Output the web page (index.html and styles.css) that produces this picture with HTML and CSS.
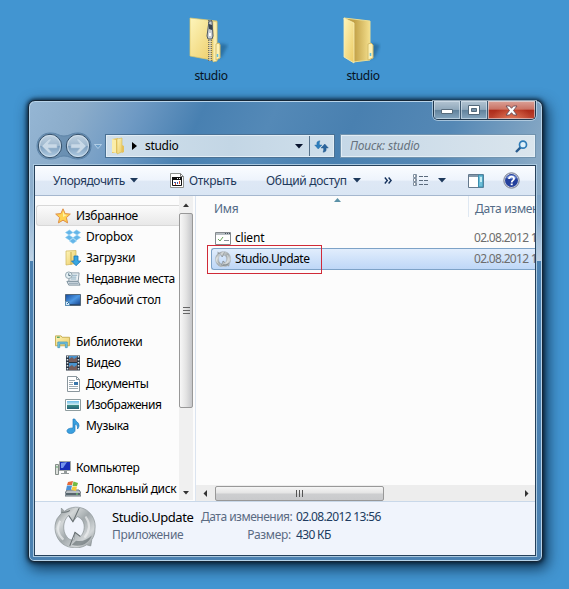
FILE: index.html
```html
<!DOCTYPE html>
<html lang="ru">
<head>
<meta charset="utf-8">
<title>studio</title>
<link rel="stylesheet" href="styles.css">
</head>
<body>
<svg class="defs" width="0" height="0" aria-hidden="true">
  <defs>
    <linearGradient id="gold" x1="0" y1="0" x2="1" y2="1"><stop offset="0" stop-color="#fdf5bb"/><stop offset="1" stop-color="#ecca62"/></linearGradient>
    <linearGradient id="goldDark" x1="0" y1="0" x2="1" y2="0"><stop offset="0" stop-color="#b8963f"/><stop offset=".4" stop-color="#c3a248"/><stop offset="1" stop-color="#f4df8d"/></linearGradient>
    <linearGradient id="steel" x1="0" y1="0" x2="1" y2="1"><stop offset="0" stop-color="#737b7e"/><stop offset=".28" stop-color="#d3d7d8"/><stop offset=".5" stop-color="#a2a9ac"/><stop offset=".75" stop-color="#d2d6d8"/><stop offset="1" stop-color="#7b8386"/></linearGradient>
    <linearGradient id="glass" x1="0" y1="0" x2="0" y2="1"><stop offset="0" stop-color="#c3d4e2"/><stop offset=".5" stop-color="#9db7ce"/><stop offset=".52" stop-color="#7fa0bf"/><stop offset="1" stop-color="#b4cfe5"/></linearGradient>
    <linearGradient id="sea" x1="0" y1="0" x2="0" y2="1"><stop offset="0" stop-color="#6bbbe8"/><stop offset=".5" stop-color="#d4eef0"/><stop offset=".55" stop-color="#3b8b85"/><stop offset="1" stop-color="#245f78"/></linearGradient>
    <linearGradient id="desk" x1="0" y1="0" x2="1" y2="1"><stop offset="0" stop-color="#164a9c"/><stop offset=".5" stop-color="#4d98e4"/><stop offset="1" stop-color="#123c86"/></linearGradient>
    <filter id="soft" x="-50%" y="-50%" width="200%" height="200%"><feGaussianBlur stdDeviation="1.8"/></filter>
    <symbol id="update" viewBox="0 0 40 40">
      <path fill-rule="evenodd" d="M7 2l3 3C16 0 25 0 31 4c6 4 9 11 8 18 0 4-1 7-3 10l-1 6-4-1C25 41 15 41 8 36 1 30-1 20 3 12l4-5zM22 10l-4 5-4-6C8 14 8 24 12 29c2 3 5 4 7 3l1-7 5 4c5-4 6-16-3-19z" fill="url(#steel)" stroke="#8d9598" stroke-width=".7"/>
      <path d="M7 6c4 0 7 0 8-2" fill="none" stroke="#6c7578"/>
      <path d="M24 2l-6 13-4-6" fill="none" stroke="#687073" stroke-width="1"/>
      <path d="M15 38l5-13 5 4" fill="none" stroke="#687073" stroke-width="1"/>
      <path d="M17 37l4-4c6 1 11-1 15-5-2 6-9 12-19 9z" fill="#5f696c" opacity=".6"/>
      <path d="M30 10c5 7 4 14-1 20M6 14c-4 7-2 14 3 18" fill="none" stroke="#eceeef" stroke-width="2" opacity=".7"/>
    </symbol>
  </defs>
</svg>

<main class="desktop">
  <div class="shortcuts">
    <div class="shortcut">
      <svg width="44" height="52" viewBox="0 0 44 52">
        <path d="M29 43l6-15 8 2-6 12-9 3z" fill="#184f78" opacity=".5" filter="url(#soft)"/>
        <path d="M5 3l27 3v40L5 41z" fill="url(#gold)" stroke="#dac66c" stroke-width=".7"/>
        <path d="M28 6l4 1v39l-4 1z" fill="#f9edaf" stroke="#d0b85e" stroke-width=".5"/>
        <path d="M31 29l3-1 1 2v13l-4 2z" fill="#fcf1b7" stroke="#d5bd6a"/>
        <path d="M32.500 39v3" stroke="#62bddd" stroke-width="1.500"/>
        <path d="M25 5v41" stroke="#77715d" stroke-width="4" stroke-dasharray="1 1"/>
        <path d="M25 5v41" stroke="#ddd9c7" stroke-width="1.200"/>
        <path d="M24 6h3l1 15-1 3h-4l-1-3z" fill="#c7cdd2" stroke="#4d5864"/>
        <path d="M24 9l3 1v5l-3-1z" fill="#38434e"/><path d="M24 21v-3h2v3z" fill="#fff"/>
      </svg>
      <span>studio</span>
    </div>
    <div class="shortcut">
      <svg width="44" height="52" viewBox="0 0 44 52">
        <path d="M28 43l7-15 8 2-5 12-9 3z" fill="#184f78" opacity=".5" filter="url(#soft)"/>
        <path d="M7 3l26 3v39l-17 2z" fill="url(#goldDark)" stroke="#eadd93"/>
        <path d="M7 3l10 5v40L7 42z" fill="url(#gold)" stroke="#f9efb7" stroke-width=".8"/>
        <path d="M31 29l3-1 2 2v13l-5 2z" fill="#fcf1b7" stroke="#d5bd6a"/>
        <path d="M33.500 38v3" stroke="#62bddd" stroke-width="1.500"/>
      </svg>
      <span>studio</span>
    </div>
  </div>

  <section class="window">
    <header class="titlebar">
      <div class="caption">
        <button class="cap min" aria-label="Свернуть"><svg width="13" height="6"><path d="M.5.500h11v4H.5z" fill="#fff" stroke="#586c7c"/></svg></button>
        <button class="cap max" aria-label="Развернуть"><svg width="13" height="11"><path d="M.5.500h11v9H.5z" fill="#fff" stroke="#53687a"/><path d="M3.500 3.500h5v3h-5z" fill="#7793a8" stroke="#53687a"/></svg></button>
        <button class="cap close" aria-label="Закрыть"><svg width="13" height="11" viewBox="0 0 13 11"><path d="M1 1h3.500l2 2.300L8.500 1H12L8.500 5.500 12 10H8.500l-2-2.300-2 2.300H1l3.500-4.500z" fill="#fff" stroke="#664b55" stroke-width=".9"/></svg></button>
      </div>
    </header>

    <nav class="addressrow">
      <svg class="history" width="70" height="28" viewBox="0 0 70 28">
        <path d="M14 1C22 1 22 4 28 4S35 1 42 1c8 0 13 6 13 13s-5 13-13 13c-7 0-8-3-14-3s-6 3-14 3C6 27 1 21 1 14S6 1 14 1z" fill="#4d779d" opacity=".5" stroke="#315c85"/>
        <circle cx="14" cy="14" r="11.700" fill="url(#glass)" stroke="#344f69"/><circle cx="14" cy="14" r="10.500" fill="none" stroke="#d4e2ee" opacity=".8"/>
        <circle cx="42" cy="14" r="11.700" fill="url(#glass)" stroke="#344f69"/><circle cx="42" cy="14" r="10.500" fill="none" stroke="#d4e2ee" opacity=".8"/>
        <path d="M6 14l7-7h3l-4 5h9v4h-9l4 5h-3z" fill="#c9d9e7" stroke="#a7bfd4" stroke-width=".6"/>
        <path d="M50 14l-7-7h-3l4 5h-9v4h9l-4 5h3z" fill="#c9d9e7" stroke="#a7bfd4" stroke-width=".6"/>
        <path d="M58.500 12.500h7l-3.500 4z" fill="#6d9fc9" stroke="#c0d8ec" stroke-width=".8"/>
      </svg>
      <div class="address">
        <svg width="16" height="18" viewBox="0 0 16 18"><path d="M2 2l6-1v15H2z" fill="#e5c360"/><path d="M2 2l4 1v13l-4-1z" fill="#faedaa"/><path d="M7 2l5-1v14l-5 2z" fill="url(#gold)" stroke="#d4b956" stroke-width=".6"/><path d="M12 8l2 1v6l-2 1z" fill="#e6c15b"/></svg>
        <svg class="crumb" width="5" height="8"><path d="M0 0l5 4-5 4z" fill="#000"/></svg>
        <span class="path">studio</span>
        <svg class="drop" width="8" height="5"><path d="M0 0h8L4 4.500z" fill="#08142e"/></svg>
        <div class="refresh"><svg width="15" height="13" viewBox="0 0 15 13"><path d="M6 .8C3 1 2.500 2.500 3 5H.7l3.500 4L8 5H5.500C5.200 3 5.500 2 6 .8z" fill="#2c7ebd" stroke="#24689e" stroke-width=".4"/><path d="M9 12.200c3-.2 3.500-1.700 3-4.200h2.300l-3.500-4L7 8h2.500c.3 2 0 3-.5 4.200z" fill="#2b659d" stroke="#1c5287" stroke-width=".4"/></svg></div>
      </div>
      <div class="search"><span>Поиск: studio</span>
        <svg width="13" height="13" viewBox="0 0 13 13"><path d="M5.800 7.200L1 12" stroke="#285a8d" stroke-width="2.400"/><circle cx="8" cy="4.700" r="3.500" fill="#dff1fb" stroke="#2e7bb7" stroke-width="1.700"/></svg>
      </div>
    </nav>

    <div class="client">
      <div class="toolbar">
        <span class="cmd organize">Упорядочить</span><svg class="arr a1" width="8" height="5"><path d="M0 0h8L4 4.500z"/></svg>
        <svg class="openicon" width="14" height="15" viewBox="0 0 14 15"><path d="M.5.500h10l3 3v11H.5z" fill="#fff" stroke="#8e928f"/><path d="M10.500.500v3h3" fill="none" stroke="#777"/><path d="M2.500 4.500h9v8h-9z" fill="#fff" stroke="#111"/><path d="M2 4h10v3H2z" fill="#111"/><path d="M7 5.500h1m1 0h1" stroke="#fff"/><path d="M4 9h2v1H4zm3 0h1v2H7z" fill="#3459a6"/><path d="M5 10h1v2H5zm4-2h1v3H9z" fill="#cf4c32"/></svg>
        <span class="cmd open">Открыть</span><span class="cmd share">Общий доступ</span><svg class="arr a2" width="8" height="5"><path d="M0 0h8L4 4.500z"/></svg>
        <svg class="more" width="8" height="7"><path d="M.8.500l2.500 3-2.500 3M4.600.500l2.500 3-2.500 3" fill="none" stroke="#14315b" stroke-width="1.400"/></svg>
        <svg class="views" width="16" height="13"><g fill="#fff" stroke="#8190a1"><path d="M.5.500h3v3h-3zM.5 4.500h3v3h-3zM.5 8.500h3v3h-3z"/></g><path d="M6 2.500h4m1 0h4M6 6.500h4m1 0h4M6 10.500h4m1 0h4" stroke="#5b6b7c"/><path d="M2 2h1M2 6h1m-1 4h1" stroke="#345"/></svg>
        <svg class="arr a3" width="8" height="5"><path d="M0 0h8L4 4.500z"/></svg>
        <svg class="pane" width="16" height="14"><path d="M.5.500h15v13H.5z" fill="#fff" stroke="#64798d"/><path d="M1 2h9" stroke="#8498aa" stroke-width="2"/><path d="M10.500 1v12H15V1z" fill="#6dbed8" stroke="#3b8eaf"/><path d="M12 3h2v5h-2z" fill="#c4edf4"/></svg>
        <svg class="help" width="17" height="17" viewBox="0 0 17 17"><circle cx="8.500" cy="8.500" r="7.700" fill="#d3d7e4" stroke="#777e91"/><circle cx="8.500" cy="8.500" r="6.500" fill="#233f9c"/><path d="M3 6c2-4 9-4 11 0-3 2-7 1-11 0z" fill="#6f8ad1"/><path d="M6 7c0-3 5-3.200 5-.3C11 8.500 8.700 8.300 8.700 10.400" fill="none" stroke="#fff" stroke-width="1.800"/><path d="M7.700 11.500h2v1.700h-2z" fill="#fff"/></svg>
      </div>

      <div class="body">
        <aside class="nav">
          <ul class="tree">
            <li class="root current"><svg width="16" height="16" viewBox="0 0 16 16"><path d="M8 .8l2.100 4.800 5.200.5-3.900 3.500 1.200 5.300L8 12.200l-4.600 2.700 1.200-5.300L.7 6.100l5.200-.5z" fill="#ffd24f" stroke="#df9048"/><path d="M8 3l1.300 3.500L12 7 8 9z" fill="#fff2a4"/></svg><span>Избранное</span></li>
            <li><svg width="16" height="16" viewBox="0 0 16 16"><path d="M4.500 1L8 3.500 4 6 .5 3.500zM11.500 1L8 3.500 12 6l3.500-2.500zM4 6l4 2.700-3.500 2.500L.5 8.500zM12 6L8 8.700l3.500 2.500 4-2.700zM4.500 12L8 9.500l3.500 2.500L8 14.500z" fill="#65b5e8" stroke="#8bd0f3" stroke-width=".6"/></svg><span>Dropbox</span></li>
            <li><svg width="16" height="16" viewBox="0 0 16 16"><path d="M1 1l10-.5v13L1 15z" fill="url(#gold)" stroke="#ceb458" stroke-width=".7"/><path d="M6 2v13" stroke="#c8aa4c"/><path d="M9 6h4v5h3l-5 4.700L6.500 11H9z" fill="#38a6df" stroke="#1a75b7" stroke-width=".8"/></svg><span>Загрузки</span></li>
            <li><svg width="17" height="16" viewBox="0 0 17 16"><path d="M5 1.500h10l-1 9H4z" fill="#edf3f6" stroke="#8799a5"/><path d="M7 4h6M6 6h6M6 8h6" stroke="#82a5bb"/><path d="M2 10.500h12l2 4H4z" fill="#dbe5eb" stroke="#798c99"/><path d="M4 12.500h10" stroke="#8499a7"/><circle cx="4" cy="4" r="3.500" fill="#e6f1f5" stroke="#90a3ad"/><path d="M4 2v2.300l2 .2" fill="none" stroke="#49677a"/></svg><span class="tight">Недавние места</span></li>
            <li><svg width="16" height="16" viewBox="0 0 16 16"><path d="M.5 2.500h15v11H.5z" fill="url(#desk)" stroke="#546779"/><path d="M1 12.500h14" stroke="#274c78"/><path d="M.5 9.500h4v4h-4z" fill="#d2e8f8" stroke="#5c8fb5"/><path d="M2 12l2-2" stroke="#2268a9"/></svg><span>Рабочий стол</span></li>
            <li class="gap"></li>
            <li class="root"><svg width="17" height="16" viewBox="0 0 17 16"><path d="M.5 1.500h6l1 1.500h8v9H.5z" fill="url(#gold)" stroke="#c6ad50"/><path d="M2 3h3" stroke="#56a663" stroke-width="1.500"/><path d="M3 14V8h10v6h-2v-4H5v4z" fill="#75c4df" stroke="#4697b8" stroke-width=".8"/></svg><span>Библиотеки</span></li>
            <li><svg width="16" height="16" viewBox="0 0 16 16"><path d="M1 .5h14v15H1z" fill="#293442"/><path d="M4 1h8v6H4zm0 7h8v7H4z" fill="#4993ce"/><path d="M4 4l3-2 2 2 3-2v5H4zm0 8l3-2 2 2 3-2v5H4z" fill="#765d5c"/><path d="M2.500 1v14m11-14v14" stroke="#e0e6ea" stroke-width="1.500" stroke-dasharray="1.500 1.500"/></svg><span>Видео</span></li>
            <li><svg width="16" height="16" viewBox="0 0 16 16"><path d="M2.500.5h9l3 3v12h-12z" fill="#fff" stroke="#8a969d"/><path d="M11.500.5v3h3" fill="none" stroke="#8a969d"/><path d="M4 4.500h6m-6 2h4m-4 2h4m-4 2h9m-9 2h9" stroke="#9ba9b2"/><path d="M9 6h4v3H9z" fill="#3a76aa"/></svg><span class="tight">Документы</span></li>
            <li><svg width="16" height="16" viewBox="0 0 16 16"><path d="M.5 2.500h15v11H.5z" fill="#fff" stroke="#8e9c9f"/><path d="M2 4h12v8H2z" fill="url(#sea)"/></svg><span class="tight">Изображения</span></li>
            <li><svg width="16" height="16" viewBox="0 0 16 16"><path d="M8 1h1.800c.5 2.500 4.200 3 4.200 6.500 0 1.300-.6 2.500-1.500 3.500.5-3-.8-4.500-2.500-5v6.500C10 14 8.200 15.500 5.500 15.500S2 14 2 12.700 4 10 8 10z" fill="#3aa0df" stroke="#1f79bb" stroke-width=".7"/></svg><span>Музыка</span></li>
            <li class="gap"></li>
            <li class="root"><svg width="16" height="16" viewBox="0 0 16 16"><path d="M4.500 1.500h11v9h-11z" fill="#172eb7" stroke="#a0a6a4"/><path d="M6 3l6-1-4 6H6z" fill="#7293ed"/><path d="M9 11h3v2h2v1H6v-1h3z" fill="#939a9b"/><path d="M.5 4.500h3v10h-3z" fill="#dde0dd" stroke="#858e89"/><path d="M1 7h2" stroke="#57a25e"/></svg><span>Компьютер</span></li>
            <li><svg width="16" height="16" viewBox="0 0 16 16"><path d="M2 9h12l2 3v3H0v-3z" fill="#b8bfc4" stroke="#69757c"/><path d="M1 12h14v2H1z" fill="#56646b"/><path d="M11 13h2" stroke="#72e06a"/><path d="M3 1l5-1-1 4H2z" fill="#e56b3a"/><path d="M8.500.500L13 2l-1 3H7.500z" fill="#72ba43"/><path d="M2 4.500h5L6 9H1z" fill="#4b91d7"/><path d="M7.500 5.500H12L11 10 6.500 9z" fill="#f5cb3d"/></svg><span class="tight">Локальный диск</span></li>
          </ul>
          <div class="vscroll"><svg width="14" height="14"><path d="M4 8h6L7 4.500z" fill="#333"/></svg><div class="vthumb"></div><div class="vtrack"></div><svg width="14" height="14"><path d="M4 5h6L7 8.500z" fill="#333"/></svg></div>
        </aside>

        <section class="files">
          <div class="headings"><span class="hname">Имя</span><svg width="7" height="4"><path d="M0 4h7L3.500 0z" fill="#5b91a7"/></svg><span class="hdate">Дата изменения</span></div>
          <div class="row"><svg width="16" height="16" viewBox="0 0 16 16"><path d="M.5 2.500h15v12H.5z" fill="#fff" stroke="#858a8e"/><path d="M1 4h14" stroke="#b6bdc2" stroke-width="2"/><path d="M10 3.500h1m1 0h1m1 0h1" stroke="#43505b"/><path d="M3 9l2 2 3-4" fill="none" stroke="#68a45b"/><path d="M9 10.500h5" stroke="#88919a"/></svg><span class="name">client</span><span class="date">02.08.2012 13:56</span></div>
          <div class="row selected"><svg width="16" height="16"><use href="#update"/></svg><span class="name">Studio.Update</span><span class="date">02.08.2012 13:56</span><div class="marker"></div></div>
          <div class="space"></div>
          <div class="hscroll"><svg width="19" height="15"><path d="M11 4v7L7.500 7.500z" fill="#333"/></svg><div class="hthumb"><i></i><i></i><i></i></div><svg class="right" width="19" height="15"><path d="M9 4v7l3.500-3.500z" fill="#333"/></svg></div>
        </section>
      </div>

      <footer class="details">
        <svg width="42" height="42"><use href="#update"/></svg>
        <div class="info"><span class="title">Studio.Update</span><span class="label l1">Дата изменения:</span><span class="value v1">02.08.2012 13:56</span>
        <span class="label kind">Приложение</span><span class="label l2">Размер:</span><span class="value v2">430 КБ</span></div>
      </footer>
    </div>
  </section>
</main>
</body>
</html>
```

FILE: styles.css
```css
* { box-sizing: border-box; }
body { margin: 0; overflow: hidden; font: 12px/16px "Noto Sans", "Open Sans", sans-serif; letter-spacing: -.3px; color: #000; }
svg { display: block; flex: none; }
.defs { position: absolute; }
span { white-space: nowrap; flex: none; }
.desktop { width: 569px; height: 589px; background: #4295d1; }

.shortcuts { display: flex; height: 100px; padding: 15px 0 0 171px; gap: 72px; }
.shortcut { width: 80px; display: flex; flex-direction: column; align-items: center; color: #061222; font-size: 12px; letter-spacing: -.35px; }
.shortcut svg { margin-left: -9px; }
.shortcut span { margin-top: 1px; }

.window {
  width: 515px; height: 462px; margin-left: 28px; padding: 0 6px;
  border: 1px solid #142637; border-radius: 7px 7px 6px 6px;
  background:
    linear-gradient(#8cb0d0, #9bbbd8 40%, #c0d4e6) left 94px / 6px 66px no-repeat,
    linear-gradient(#7da3c5, #8cafd0 40%, #c0d1e4) right 94px / 6px 66px no-repeat,
    linear-gradient(115deg, #95b6d4 0, #8bacca 10%, #6f9ac4 20%, #4880b1 32%, #5489b7 45%, #4980b0 60%, #5588b5 78%, #88a9c5 96%) 0 0 / 100% 94px no-repeat,
    #4b81b1;
  box-shadow: inset 0 0 0 1px #b8d4ea, 0 0 4px 1px rgba(6,23,40,.9), 3px 5px 14px 2px rgba(0,25,48,.72);
}
.titlebar { height: 34px; display: flex; justify-content: flex-end; }
.caption { display: flex; width: 103px; height: 19px; border: 1px solid #20374c; border-top: 0; border-radius: 0 0 5px 5px; overflow: hidden; box-shadow: 0 0 0 1px rgba(198,219,235,.7); }
.cap { display: flex; align-items: center; justify-content: center; padding: 0; border: 0; border-right: 1px solid #3c566e; width: 27px; background: linear-gradient(#b3c4d2 0, #91a9bc 47%, #60819b 50%, #86a6bf 100%); box-shadow: inset 0 0 0 1px rgba(225,238,247,.55); }
.cap.min svg { margin-top: 4px; }
.cap.close { flex: 1; border-right: 0; background: radial-gradient(ellipse at 50% 110%, rgba(238,137,100,.8), transparent 60%), linear-gradient(#dba298 0, #c97264 46%, #ad2b19 50%, #bd4632 100%); }

.addressrow { display: flex; height: 30px; }
.history { width: 70px; margin: -3px 0 0 1px; }
.address { width: 228px; height: 22px; display: flex; align-items: center; border: 1px solid #e2edf5; outline: 1px solid #4a7194; background: linear-gradient(90deg, #d0dfeb, #c3d6e5 55%, #cfdfeb); padding-left: 3px; }
.crumb { margin-left: 6px; }
.path { margin-left: 8px; flex: 1; }
.drop { margin-right: 6px; }
.refresh { align-self: stretch; width: 24px; border-left: 1px solid #56728b; display: flex; align-items: center; justify-content: center; }
.search { width: 194px; height: 22px; margin-left: 7px; display: flex; align-items: center; justify-content: space-between; border: 1px solid #e2edf5; outline: 1px solid #7193ae; background: linear-gradient(90deg, #c6d8e7, #dae5ed); padding: 0 6px 0 8px; font-style: italic; color: #66727d; letter-spacing: -.2px; }

.client { width: 502px; height: 391px; margin-left: -1px; border: 1px solid #26415b; outline: 1px solid #aac8df; background: #fcfcfc; overflow: hidden; }
.toolbar { display: flex; align-items: center; height: 30px; padding-left: 18px; background: linear-gradient(#fafcff 0, #eef4fc 48%, #dee8f5 53%, #dae6f4 100%); border-bottom: 1px solid #a5b7ce; color: #1e395b; }
.arr { fill: #1e395b; }
.organize { width: 77px; letter-spacing: -.45px; }
.a1 { margin-right: 32px; }
.openicon { margin-right: 5px; }
.open { width: 77px; }
.share { width: 87px; }
.more { margin-left: 23px; }
.views { margin-left: 21px; }
.a3 { margin-left: 9px; }
.pane { margin-left: 22px; }
.help { margin-left: 19px; }

.body { display: flex; height: 305px; }
.nav { width: 161px; display: flex; border-right: 1px solid #dbe4f0; }
.tree { width: 144px; height: 305px; margin: 0; padding: 9px 0 0; list-style: none; overflow: hidden; }
.tree li { height: 21px; display: flex; align-items: center; gap: 5px; padding-left: 30px; }
.tree svg { width: 16px; }
.tree .tight { letter-spacing: -.42px; }
.tree .root { padding-left: 20px; }
.tree .current { border: 1px solid #d8d8d8; border-right: 0; border-radius: 3px 0 0 3px; background: linear-gradient(#fbfbfb, #e8e8e8); margin-left: 1px; padding-left: 18px; }
.vscroll { width: 14px; background: #f0f0f0; display: flex; flex-direction: column; margin-bottom: 1px; padding-top: 3px; }
.vthumb { height: 195px; border: 1px solid #989898; border-radius: 2px; background: linear-gradient(#666, #666) center 93px / 7px 1px no-repeat, linear-gradient(#666, #666) center 96px / 7px 1px no-repeat, linear-gradient(#666, #666) center 99px / 7px 1px no-repeat, linear-gradient(90deg, #f7f7f7, #e3e3e3 50%, #c5c6c9); }
.vtrack { flex: 1; }

.files { width: 339px; display: flex; flex-direction: column; overflow: hidden; }
.headings { display: flex; height: 31px; color: #536b87; line-height: 25px; }
.hname { width: 124px; padding-left: 18px; }
.headings svg { margin: 2px 0 0 14px; }
.hdate { margin-left: 127px; height: 21px; border-left: 1px solid #dfe8f2; padding-left: 6px; }
.row { position: relative; display: flex; align-items: center; height: 21px; margin-left: 15px; padding-left: 4px; }
.name { width: 239px; margin-left: 4px; letter-spacing: -.45px; }
.row:not(.selected) .name { letter-spacing: -.2px; }
.date { color: #6d6d6d; letter-spacing: -.7px; }
.selected { height: 22px; border: 1px solid #7da2c7; border-right: 0; border-radius: 3px 0 0 3px; padding-left: 3px; background: linear-gradient(#e1edfc, #bed7f7); }
.marker { position: absolute; left: -5px; top: -4px; width: 115px; height: 29px; border: 1px solid #d02a38; }
.space { flex: 1; }
.hscroll { height: 16px; display: flex; align-items: center; background: #ededed; }
.hthumb { width: 169px; height: 15px; border: 1px solid #989898; border-radius: 2px; background: linear-gradient(#f5f5f5, #e4e4e4 48%, #cdced0 52%, #c9cacc); display: flex; align-items: center; justify-content: center; gap: 2px; }
.hthumb i { width: 1px; height: 7px; background: #555; }
.hscroll .right { margin-left: auto; }

.details { display: flex; height: 54px; border-top: 1px solid #c9d8e9; background: #f0f4fc; padding: 4px 0 0 19px; }
.info { display: grid; grid-template-columns: 89px 90px 90px; grid-template-rows: 18px 18px; align-items: center; margin: 2px 0 0 16px; align-content: start; }
.title { font-size: 13px; letter-spacing: -.45px; }
.label { color: #5b6b83; }
.l1 { letter-spacing: -.5px; }
.l2 { justify-self: end; }
.value { color: #203b60; padding-left: 5px; letter-spacing: -.65px; }
```
